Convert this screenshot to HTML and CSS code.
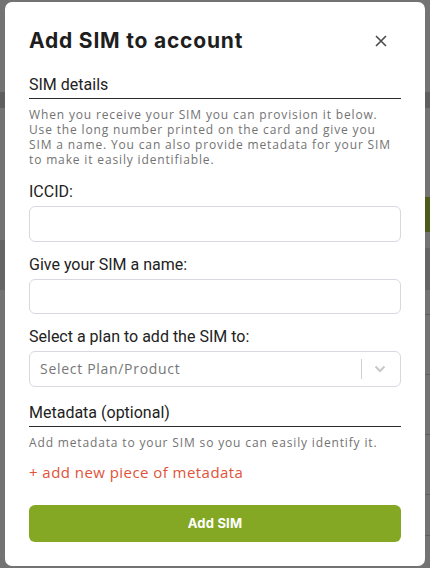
FILE: index.html
```html
<!DOCTYPE html>
<html lang="en">
<head>
<meta charset="utf-8">
<title>Add SIM to account</title>
<link rel="stylesheet" href="styles.css">
</head>
<body>
<div class="modal">
  <div class="modal-header">
    <h1 class="modal-title">Add SIM to account</h1>
    <button class="close" aria-label="Close">
      <svg width="12" height="12" viewBox="0 0 12 12"><path d="M1 1 L11 11 M11 1 L1 11" stroke="#4a4a4a" stroke-width="1.6" fill="none"/></svg>
    </button>
  </div>
  <h2 class="section-title">SIM details</h2>
  <p class="desc">When you receive your SIM you can provision it below. Use the long number printed on the card and give you SIM a name. You can also provide metadata for your SIM to make it easily identifiable.</p>

  <label class="field-label first">ICCID:</label>
  <div class="input"></div>

  <label class="field-label">Give your SIM a name:</label>
  <div class="input"></div>

  <label class="field-label">Select a plan to add the SIM to:</label>
  <div class="input select">
    <span class="placeholder">Select Plan/Product</span>
    <span class="sep"></span>
    <svg class="chev" width="12" height="8" viewBox="0 0 12 8"><path d="M1.5 1.5 L6 6 L10.5 1.5" stroke="#c8c8c8" stroke-width="2" fill="none"/></svg>
  </div>

  <h2 class="section-title meta">Metadata (optional)</h2>
  <p class="desc meta-desc">Add metadata to your SIM so you can easily identify it.</p>
  <a class="add-link">+ add new piece of metadata</a>

  <button class="submit">Add SIM</button>
</div>
</body>
</html>
```
FILE: styles.css
```css
html, body { margin: 0; padding: 0; }
body {
  width: 430px;
  height: 568px;
  overflow: hidden;
  background:
    linear-gradient(to bottom,
      transparent 0, transparent 92px, rgba(0,0,0,0.18) 92px, rgba(0,0,0,0.18) 108px, transparent 108px,
      transparent 240px, rgba(0,0,0,0.12) 240px, rgba(0,0,0,0.12) 290px, transparent 290px) left / 10px 100% no-repeat,
    linear-gradient(to bottom,
      transparent 0, transparent 92px, rgba(0,0,0,0.18) 92px, rgba(0,0,0,0.18) 108px, transparent 108px,
      transparent 197px, #4c5a1a 197px, #4c5a1a 232px, transparent 232px,
      transparent 248px, rgba(0,0,0,0.12) 248px, rgba(0,0,0,0.12) 290px, transparent 290px,
      transparent 314px, #5e5e5e 314px, #5e5e5e 315px, transparent 315px,
      transparent 374px, #5e5e5e 374px, #5e5e5e 375px, transparent 375px,
      transparent 434px, #5e5e5e 434px, #5e5e5e 435px, transparent 435px,
      transparent 494px, #5e5e5e 494px, #5e5e5e 495px, transparent 495px,
      transparent 535px, #5e5e5e 535px, #5e5e5e 536px, transparent 536px) right / 10px 100% no-repeat,
    #737373;
  padding-top: 2px;
  box-sizing: border-box;
}
.modal {
  margin: 0 5px;
  height: 564px;
  box-sizing: border-box;
  background: #fff;
  border-radius: 7px;
  padding: 25px 24px 24px;
  display: flex;
  flex-direction: column;
  font-family: Roboto, "Liberation Sans", sans-serif;
}
.modal-header {
  display: flex;
  align-items: center;
  justify-content: space-between;
  height: 28px;
}
.modal-title {
  margin: 0;
  font-family: Inter, "Liberation Sans", sans-serif;
  font-weight: 700;
  font-size: 21px;
  letter-spacing: 0.8px;
  line-height: 28px;
  color: #1e1e1e;
}
.close {
  border: 0;
  background: none;
  padding: 0;
  margin-right: 14px;
  width: 12px;
  height: 12px;
  display: flex;
}
.section-title {
  margin: 20px 0 0;
  font-weight: 400;
  font-size: 16px;
  line-height: 20px;
  color: #222;
  padding-bottom: 3px;
  border-bottom: 1px solid #2b2b2b;
}
.section-title.meta { margin-top: 16px; }
.desc {
  margin: 8px 0 0;
  font-family: "Open Sans", sans-serif;
  font-size: 12px;
  letter-spacing: 0.85px;
  line-height: 15px;
  color: #737373;
}
.meta-desc {
  margin-top: 8px;
}
.field-label {
  display: block;
  margin-top: 13px;
  font-size: 16px;
  line-height: 20px;
  color: #222;
}
.field-label.first { margin-top: 15px; }
.input {
  margin-top: 4px;
  height: 36px;
  box-sizing: border-box;
  border: 1px solid #d6d9e2;
  border-radius: 6px;
}
.select {
  display: flex;
  align-items: center;
  padding: 0 14px 0 10px;
}
.placeholder {
  flex: 1;
  font-family: "Open Sans", sans-serif;
  font-size: 14px;
  letter-spacing: 0.7px;
  color: #777;
}
.sep {
  width: 1px;
  height: 20px;
  background: #cfcfcf;
  margin-right: 12px;
}
.add-link {
  margin-top: 12px;
  font-family: "Open Sans", sans-serif;
  font-size: 15px;
  letter-spacing: 0.45px;
  line-height: 20px;
  color: #e0533a;
}
.submit {
  margin-top: 23px;
  height: 38px;
  border: 0;
  border-radius: 6px;
  background: #84a824;
  color: #fff;
  font-family: Inter, sans-serif;
  font-weight: 700;
  font-size: 13px;
  letter-spacing: 0.2px;
}
```
